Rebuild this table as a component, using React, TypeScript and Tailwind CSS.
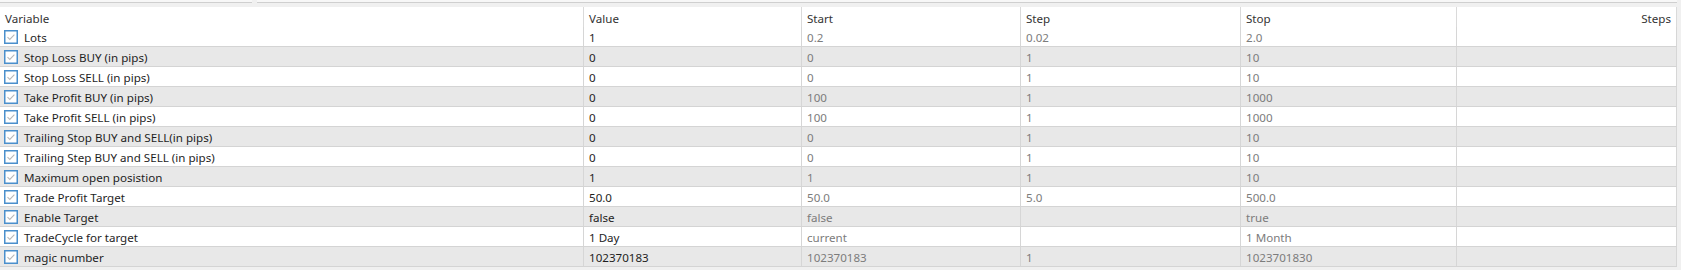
const rows: [string, string, string, string, string][] = [
  ["Lots", "1", "0.2", "0.02", "2.0"],
  ["Stop Loss BUY (in pips)", "0", "0", "1", "10"],
  ["Stop Loss SELL (in pips)", "0", "0", "1", "10"],
  ["Take Profit BUY (in pips)", "0", "100", "1", "1000"],
  ["Take Profit SELL (in pips)", "0", "100", "1", "1000"],
  ["Trailing Stop BUY and SELL(in pips)", "0", "0", "1", "10"],
  ["Trailing Step BUY and SELL (in pips)", "0", "0", "1", "10"],
  ["Maximum open posistion", "1", "1", "1", "10"],
  ["Trade Profit Target", "50.0", "50.0", "5.0", "500.0"],
  ["Enable Target", "false", "false", "", "true"],
  ["TradeCycle for target", "1 Day", "current", "", "1 Month"],
  ["magic number", "102370183", "102370183", "1", "1023701830"],
];

const cols = "grid grid-cols-[584px_218px_219px_220px_216px_220px]";
const cell = "px-[5px] pt-[3px] leading-[16px] border-r border-[#d6d6d6]";
const head = "px-[5px] pt-[4px] leading-[16px] border-r border-[#dadada]";

function CheckBox() {
  return (
    <svg width="14" height="14" viewBox="0 0 14 14" className="shrink-0">
      <rect x="0.75" y="0.75" width="12.5" height="12.5" fill="#fff" stroke="#4a8fcc" strokeWidth="1.5" />
      <path d="M3.5 7.2 L5.8 9.4 L10.4 4.6" fill="none" stroke="#b8b8b8" strokeWidth="1.1" />
    </svg>
  );
}

export default function App() {
  return (
    <div className="w-[1681px] h-[270px] bg-[#f0f0f0] overflow-hidden text-[11.6px] font-['Segoe_UI','Noto_Sans',sans-serif]">
      <div className="h-[7px] flex gap-[5px]">
        <div className="w-[252px] h-[3px] bg-[#f7f7f7] border-b border-[#cfcfcf]" />
        <div className="w-[1420px] h-[3px] bg-[#f7f7f7] border-b border-[#cfcfcf]" />
      </div>
      <div className="w-[1677px]">
        <div className={`${cols} h-[20px] bg-white text-[#333]`}>
          <div className={head}>Variable</div>
          <div className={head}>Value</div>
          <div className={head}>Start</div>
          <div className={head}>Step</div>
          <div className={head}>Stop</div>
          <div className={`${head} text-right`}>Steps</div>
        </div>
        {rows.map(([name, value, start, step, stop], i) => (
          <div
            key={name}
            className={`${cols} h-[20px] border-b border-[#d4d4d4] ${i % 2 === 0 ? "bg-white" : "bg-[#e8e8e8]"}`}
          >
            <div className="flex items-center gap-[6px] pl-[4px] pt-[1px] border-r border-[#d6d6d6] text-[#1e1e1e]">
              <CheckBox />
              <span className="pt-[2px] leading-[16px]">{name}</span>
            </div>
            <div className={`${cell} text-[#1e1e1e]`}>{value}</div>
            <div className={`${cell} text-[#7c7c7c]`}>{start}</div>
            <div className={`${cell} text-[#7c7c7c]`}>{step}</div>
            <div className={`${cell} text-[#7c7c7c]`}>{stop}</div>
            <div className="border-r border-[#d6d6d6]" />
          </div>
        ))}
      </div>
    </div>
  );
}
